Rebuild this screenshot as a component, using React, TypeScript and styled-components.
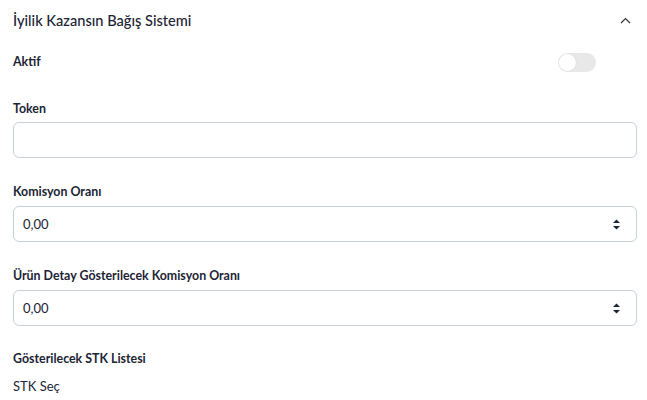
import React from "react";
import styled, { createGlobalStyle } from "styled-components";

const Global = createGlobalStyle`
  html, body { margin: 0; padding: 0; background: #fff; }
  body { font-family: "Lato", "Noto Sans", sans-serif; color: #1b2434; }
  * { box-sizing: border-box; }
`;

const Panel = styled.section`
  width: 647px;
  padding: 0 10px 0 13px;
  display: flex;
  flex-direction: column;
`;

const Header = styled.div`
  height: 40px;
  display: flex;
  align-items: center;
  justify-content: space-between;
  padding-right: 6px;
`;

const Title = styled.h2`
  margin: 0;
  font-size: 14.6px;
  font-weight: 500;
  color: #1b2434;
`;

const Field = styled.div<{ $gap?: number; $mt?: number }>`
  display: flex;
  flex-direction: column;
  gap: ${(p) => p.$gap ?? 6}px;
  margin-top: ${(p) => p.$mt ?? 0}px;
`;

const Label = styled.label`
  font-size: 12.4px;
  font-weight: 700;
  line-height: 16px;
  color: #1b2434;
`;

const ToggleRow = styled.div`
  display: flex;
  align-items: center;
  justify-content: space-between;
  height: 22px;
  margin-top: 11px;
  padding-right: 41px;
`;

const Track = styled.div`
  width: 38px;
  height: 19px;
  border-radius: 10px;
  background: #e8e8e8;
  position: relative;
`;

const Knob = styled.div`
  position: absolute;
  left: 1px;
  top: 1px;
  width: 17px;
  height: 17px;
  border-radius: 50%;
  background: #fff;
  box-shadow: 0 0 0 0.5px #dcdcdc;
`;

const InputBox = styled.div`
  height: 36px;
  border: 1px solid #c8d0da;
  border-radius: 6px;
  display: flex;
  align-items: center;
  justify-content: space-between;
  padding: 0 15px 0 9px;
  font-size: 13px;
  color: #1b2434;
`;

const Value = styled.span`
  font-size: 13px;
`;

const Plain = styled.div`
  font-size: 13px;
  color: #1b2434;
`;

const Chevron = () => (
  <svg width="11" height="7" viewBox="0 0 11 7" fill="none">
    <path d="M1 6L5.5 1.5L10 6" stroke="#333" strokeWidth="1.2" />
  </svg>
);

const Spinner = () => (
  <svg width="9" height="13" viewBox="0 0 9 13">
    <path d="M4.5 1.5L8 5H1Z" fill="#1b2434" />
    <path d="M4.5 11.5L8 8H1Z" fill="#1b2434" />
  </svg>
);

export default function App() {
  return (
    <>
      <Global />
      <Panel>
        <Header>
          <Title>İyilik Kazansın Bağış Sistemi</Title>
          <Chevron />
        </Header>
        <ToggleRow>
          <Label>Aktif</Label>
          <Track>
            <Knob />
          </Track>
        </ToggleRow>
        <Field $mt={28} $gap={5}>
          <Label>Token</Label>
          <InputBox />
        </Field>
        <Field $mt={26}>
          <Label>Komisyon Oranı</Label>
          <InputBox>
            <Value>0,00</Value>
            <Spinner />
          </InputBox>
        </Field>
        <Field $mt={26}>
          <Label>Ürün Detay Gösterilecek Komisyon Oranı</Label>
          <InputBox>
            <Value>0,00</Value>
            <Spinner />
          </InputBox>
        </Field>
        <Field $mt={25} $gap={11}>
          <Label>Gösterilecek STK Listesi</Label>
          <Plain>STK Seç</Plain>
        </Field>
      </Panel>
    </>
  );
}
